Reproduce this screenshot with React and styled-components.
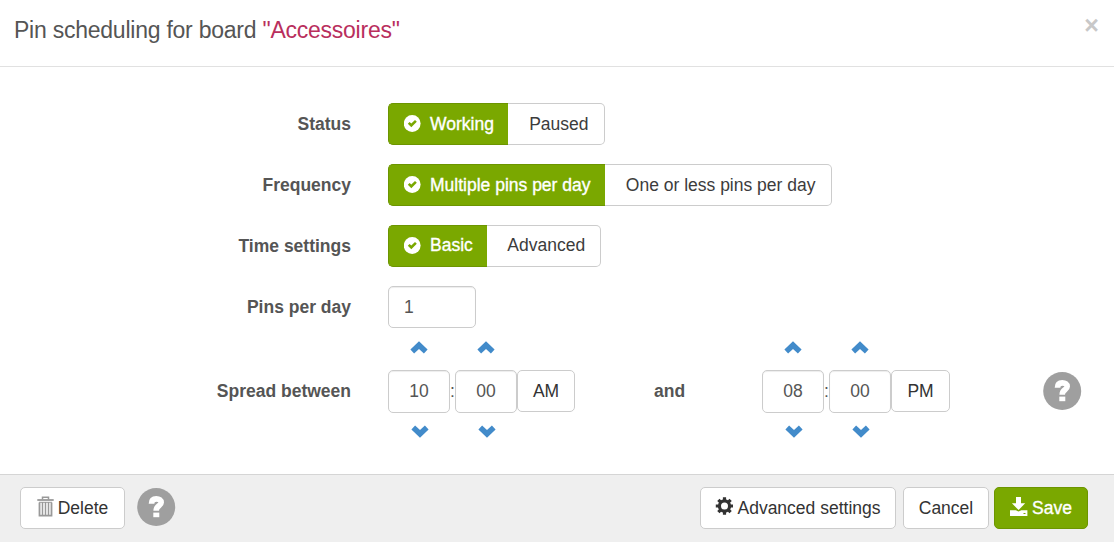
import React, { useState } from 'react';
import styled, { createGlobalStyle } from 'styled-components';

const GlobalStyle = createGlobalStyle`
    * {
        box-sizing: border-box;
    }
    body {
        margin: 0;
        background: #FFFFFF;
        color: #555555;
        font-family: "Liberation Sans", Arial, sans-serif;
        font-size: 17.5px;
        line-height: 25px;
    }
    button, input {
        font-family: inherit;
        font-size: inherit;
        line-height: inherit;
    }
`;

const Modal = styled.div`
    display: flex;
    flex-direction: column;
    width: 100%;
    height: 100vh;
    min-height: 542px;
`;

// header
const Header = styled.header`
    display: flex;
    justify-content: space-between;
    height: 67px;
    padding: 14px 15px 0 14px;
    border-bottom: 1px solid #E1E1E1;
`;

const Title = styled.h4`
    margin: 0;
    font-size: 23px;
    font-weight: normal;
    letter-spacing: -0.24px;
    line-height: 32px;
    span {
        color: #B92F5D;
    }
`;

const CloseButton = styled.button`
    width: 15px;
    height: 22px;
    padding: 0;
    border: 0;
    background: none;
    color: #C8C8C8;
    font-size: 25px;
    font-weight: bold;
    line-height: 22px;
    cursor: pointer;
`;

// form rows
const Body = styled.main`
    display: flex;
    flex-direction: column;
    flex-grow: 1;
    gap: 19px;
    padding-top: 36px;
`;

const Row = styled.div`
    display: flex;
    align-items: center;
    height: 42px;
`;

const Label = styled.label`
    width: 351px;
    margin-right: 37px;
    font-weight: bold;
    text-align: right;
`;

const ButtonGroup = styled.div`
    display: flex;
`;

const ToggleButton = styled.button`
    display: flex;
    align-items: center;
    height: 42px;
    padding: 0 14px ${({ $raise }) => $raise || 0}px 15px;
    border: 1px solid ${({ $active }) => ($active ? '#6C9500' : '#CCCCCC')};
    background: ${({ $active }) => ($active ? '#7AA800' : '#FFFFFF')};
    color: ${({ $active }) => ($active ? '#FFFFFF' : '#3C3C3C')};
    -webkit-text-stroke: ${({ $active }) => ($active ? '0.35px' : '0')};
    white-space: nowrap;
    cursor: pointer;
    &:first-child {
        border-right: 0;
        border-radius: 5px 0 0 5px;
    }
    &:last-child {
        padding-right: ${({ $raise }) => ($raise ? '14.5px' : '15.5px')};
        padding-left: ${({ $raise }) => ($raise ? '20.5px' : '21.3px')};
        border-left: 0;
        border-radius: 0 5px 5px 0;
    }
    svg {
        margin: 0 9px ${({ $raise }) => ($raise ? 0 : 2)}px 0;
    }
`;

const Input = styled.input`
    width: ${({ $width }) => $width}px;
    height: ${({ $height }) => $height || 42}px;
    padding: 0 15px;
    border: 1px solid #CCCCCC;
    border-radius: 5px;
    outline: none;
    background: #FFFFFF;
    box-shadow: inset 0 1px 1px rgba(0, 0, 0, 0.075);
    color: #555555;
    text-align: ${({ $center }) => ($center ? 'center' : 'left')};
`;

// time picker
const SpreadRow = styled.div`
    display: flex;
    align-items: center;
    height: 102px;
    margin-top: -7px;
`;

const Picker = styled.div`
    display: grid;
    grid-template-columns: 62px 5px 62px max-content;
    grid-template-rows: 29px 43px 28px;
    width: 187px;
`;

const StepButton = styled.button`
    display: flex;
    justify-content: center;
    align-items: flex-start;
    grid-column: ${({ $column }) => $column};
    padding: ${({ $down }) => ($down ? '12px 0 0 2px' : '0 1px 0 0')};
    border: 0;
    background: none;
    color: #428BCA;
    cursor: pointer;
`;

const Colon = styled.span`
    align-self: center;
    text-align: center;
`;

const MeridianButton = styled.button`
    width: ${({ $width }) => $width}px;
    height: 42px;
    padding: 0;
    border: 1px solid #CCCCCC;
    border-radius: 5px;
    background: #FFFFFF;
    color: #333333;
    cursor: pointer;
`;

const And = styled.span`
    width: 187px;
    padding-left: 79px;
    font-weight: bold;
`;

const HelpWrap = styled.span`
    display: flex;
    align-self: ${({ $top }) => ($top ? 'flex-start' : 'center')};
    margin: ${({ $top }) => $top || 0}px 0 0 ${({ $left }) => $left}px;
`;

// footer
const Footer = styled.footer`
    display: flex;
    height: 68px;
    padding: 12px 26px 0 20px;
    border-top: 1px solid #D5D5D5;
    background: #EFEFEF;
`;

const Spacer = styled.div`
    flex-grow: 1;
`;

const FooterButton = styled.button`
    display: flex;
    justify-content: center;
    align-items: center;
    gap: 4px;
    width: ${({ $width }) => $width}px;
    height: 42px;
    margin-left: ${({ $left }) => $left || 0}px;
    padding: 0;
    border: 1px solid ${({ $primary }) => ($primary ? '#6C9500' : '#CCCCCC')};
    border-radius: 5px;
    background: ${({ $primary }) => ($primary ? '#7AA800' : '#FFFFFF')};
    color: ${({ $primary }) => ($primary ? '#FFFFFF' : '#333333')};
    -webkit-text-stroke: ${({ $primary }) => ($primary ? '0.35px' : '0')};
    white-space: nowrap;
    cursor: pointer;
    svg {
        margin-bottom: 4px;
    }
`;

const OkIcon = () => (
    <svg width="17" height="17" viewBox="0 0 17 17">
        <circle cx="8.2" cy="8.5" r="8.4" fill="#FFFFFF" />
        <path d="M3.8 8.7l1.8-1.8 1.7 1.7 3.7-3.6 1.8 1.7-5.5 5.5z" fill="#7AA800" />
    </svg>
);

const ChevronIcon = ({ down }) => (
    <svg width="18" height="13" viewBox="0 0 18 13">
        <path
            d="M9 .2L17.6 8.5 13.9 12.5 9 8 4.1 12.5.4 8.5z"
            fill="currentColor"
            transform={down ? 'rotate(180 9 6.5)' : undefined}
        />
    </svg>
);

const HelpIcon = () => (
    <svg width="39" height="38" viewBox="0 0 39 38">
        <circle cx="19.2" cy="19" r="19" fill="#9F9F9F" />
        <path
            d="M14.5 15.8c0-3.4 1.8-4.9 4.8-4.9s4.9 1.4 4.9 3.6c0 3.6-5 2.7-5 8.2"
            fill="none"
            stroke="#FFFFFF"
            strokeWidth="5.6"
        />
        <path d="M16.3 24.6h6v4.6h-6z" fill="#FFFFFF" />
    </svg>
);

const TrashIcon = () => (
    <svg width="17" height="21" viewBox="0 0 17 21" fill="none" stroke="#999999">
        <path d="M5.5 3.5V1.2h6v2.3" strokeWidth="1.5" />
        <path d="M.3 4h16.4" strokeWidth="1.8" />
        <path d="M2.5 6.5v13.2h12V6.5" strokeWidth="1.8" />
        <path d="M5.5 6v13M8.5 6v13M11.5 6v13" strokeWidth="1.5" />
        <path d="M2 6.3h13" strokeWidth="1" />
    </svg>
);

const GearIcon = () => (
    <svg width="18" height="18" viewBox="0 0 18 18" fill="none" stroke="#333333">
        <circle cx="9.5" cy="9" r="5.1" strokeWidth="3.2" />
        <path
            d="M9.5.3v3M9.5 14.7v3M.8 9h3M15 9h3M3.35 2.85l2.1 2.1M13.55 13.05l2.1 2.1M3.35 15.15l2.1-2.1M13.55 4.95l2.1-2.1"
            strokeWidth="3.2"
        />
    </svg>
);

const SaveIcon = () => (
    <svg width="18" height="19" viewBox="0 0 18 19">
        <path d="M6 0h5v6.3h4.2L8.600 13 1.900 6.300H6z" fill="#FFFFFF" />
        <path d="M0 13.300h5.800l2.800 1.200 2.800-1.200h6V19H0z" fill="#FFFFFF" />
        <path d="M13.500 16h2v1h-2z" fill="#7AA800" />
    </svg>
);

const Toggle = ({ options, raise }) => {
    const [selected, setSelected] = useState(options[0]);

    return (
        <ButtonGroup>
            {options.map((option) => (
                <ToggleButton
                    key={option}
                    $active={option === selected}
                    $raise={raise}
                    onClick={() => setSelected(option)}
                >
                    {option === selected && <OkIcon />}
                    {option}
                </ToggleButton>
            ))}
        </ButtonGroup>
    );
};

const TimePicker = ({ hour, minute, meridian }) => (
    <Picker>
        <StepButton $column={1} aria-label="Next hour"><ChevronIcon /></StepButton>
        <StepButton $column={3} aria-label="Next minute"><ChevronIcon /></StepButton>
        <span />
        <Input $width={62} $height={43} $center defaultValue={hour} />
        <Colon>:</Colon>
        <Input $width={62} $height={43} $center defaultValue={minute} />
        <MeridianButton $width={meridian === 'AM' ? 58 : 59}>{meridian}</MeridianButton>
        <StepButton $column={1} $down aria-label="Previous hour"><ChevronIcon down /></StepButton>
        <StepButton $column={3} $down aria-label="Previous minute"><ChevronIcon down /></StepButton>
    </Picker>
);

const App = () => {
    return (
        <>
            <GlobalStyle />
            <Modal>
                <Header>
                    <Title>Pin scheduling for board <span>"Accessoires"</span></Title>
                    <CloseButton>×</CloseButton>
                </Header>
                <Body>
                    <Row>
                        <Label>Status</Label>
                        <Toggle options={['Working', 'Paused']} />
                    </Row>
                    <Row>
                        <Label>Frequency</Label>
                        <Toggle options={['Multiple pins per day', 'One or less pins per day']} />
                    </Row>
                    <Row>
                        <Label>Time settings</Label>
                        <Toggle options={['Basic', 'Advanced']} raise={2} />
                    </Row>
                    <Row>
                        <Label>Pins per day</Label>
                        <Input $width={88} defaultValue="1" />
                    </Row>
                    <SpreadRow>
                        <Label>Spread between</Label>
                        <TimePicker hour="10" minute="00" meridian="AM" />
                        <And>and</And>
                        <TimePicker hour="08" minute="00" meridian="PM" />
                        <HelpWrap $left={94}><HelpIcon /></HelpWrap>
                    </SpreadRow>
                </Body>
                <Footer>
                    <FooterButton $width={105}><TrashIcon />Delete</FooterButton>
                    <HelpWrap $top={1} $left={12}><HelpIcon /></HelpWrap>
                    <Spacer />
                    <FooterButton $width={196}><GearIcon />Advanced settings</FooterButton>
                    <FooterButton $width={86} $left={7}>Cancel</FooterButton>
                    <FooterButton $width={94} $left={5} $primary><SaveIcon />Save</FooterButton>
                </Footer>
            </Modal>
        </>
    );
};

export default App;
